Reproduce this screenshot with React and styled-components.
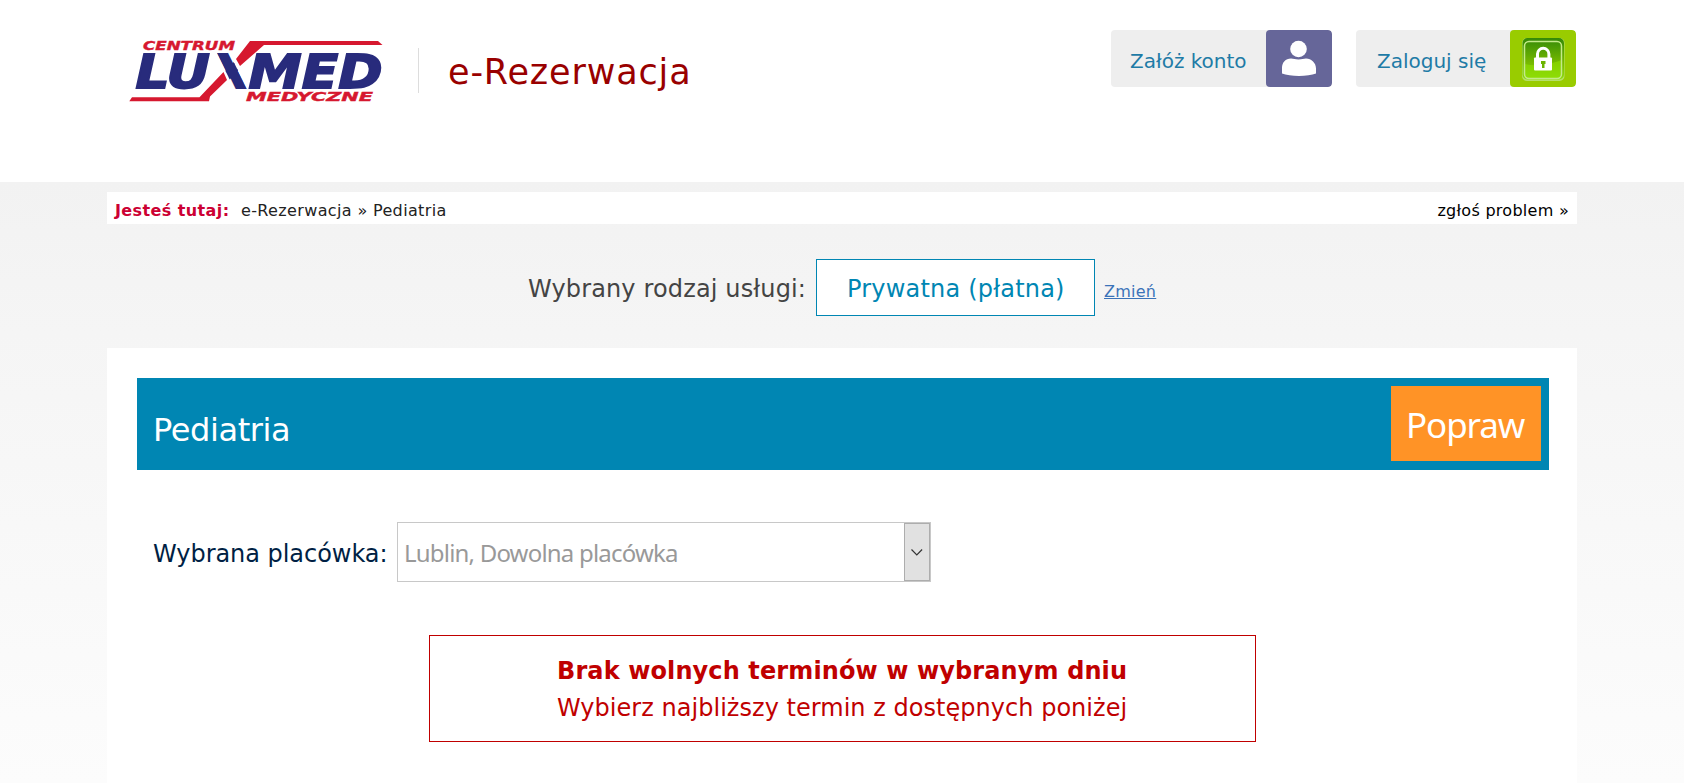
import React from "react";
import styled, { createGlobalStyle } from "styled-components";

const GlobalStyle = createGlobalStyle`
  * { box-sizing: border-box; }
  body {
    margin: 0;
    background: #fff;
    font-family: "DejaVu Sans", Verdana, sans-serif;
    overflow: hidden;
  }
`;

const Page = styled.div`
  display: flex;
  flex-direction: column;
  height: 783px;
`;

const Header = styled.header`
  display: flex;
  align-items: flex-start;
  flex: 0 0 182px;
  width: 1470px;
  margin: 0 auto;
  padding: 30px 1px 0 20px;
`;

const Logo = styled.svg`
  flex: none;
  width: 260px;
  height: 70px;
  margin-top: 5px;
`;

const Title = styled.h1`
  height: 45px;
  margin: 18px 0 0 31px;
  padding-left: 29px;
  border-left: 1px solid #ddd;
  color: #990000;
  font-size: 35px;
  font-weight: 400;
  line-height: 48px;
  letter-spacing: 0.85px;
  white-space: nowrap;
`;

const Account = styled.nav`
  display: flex;
  gap: 24px;
  margin-left: auto;
`;

const AccountButton = styled.a`
  display: flex;
  width: ${(p) => p.$width}px;
  height: 57px;
  overflow: hidden;
  border-radius: 4px;
  background: #eee;
  color: #1e7ba6;
  font-size: 20px;
  line-height: 62px;
  white-space: nowrap;
`;

const AccountLabel = styled.span`
  flex: 1;
  padding-left: ${(p) => p.$pad}px;
`;

const AccountIcon = styled.svg`
  width: 66px;
  height: 57px;
  border-radius: 4px;
  background: ${(p) => p.$color};
`;

const Main = styled.main`
  flex: 1;
  padding-top: 10px;
  background: linear-gradient(#f2f2f2, #f5f5f5 25%, #fcfcfc);
`;

const Column = styled.div`
  width: 1470px;
  margin: 0 auto;
`;

const Breadcrumb = styled.div`
  display: flex;
  height: 32px;
  padding: 0 8px;
  background: #fff;
  color: #222;
  font-size: 16px;
  line-height: 38px;
  white-space: pre;
`;

const Here = styled.b`
  width: 126px;
  color: #cc0033;
  letter-spacing: 0.4px;
`;

const Trail = styled.span`
  letter-spacing: 0.36px;
`;

const Report = styled.a`
  margin-left: auto;
  color: #000;
  letter-spacing: 0.28px;
`;

const Service = styled.section`
  display: flex;
  height: 124px;
  padding: 35px 0 0 421px;
  color: #444;
  font-size: 24px;
  line-height: 61px;
  white-space: nowrap;
`;

const ServiceLabel = styled.span`
  width: 288px;
  letter-spacing: 0.14px;
`;

const ServiceValue = styled.div`
  width: 279px;
  height: 57px;
  padding-left: 30px;
  border: 1px solid #0086b3;
  background: #fff;
  color: #0086b3;
  line-height: 59px;
  letter-spacing: 0.2px;
`;

const ChangeLink = styled.a`
  margin-left: 9px;
  color: #3b73b9;
  font-size: 16px;
  line-height: 66px;
  text-decoration: underline;
  letter-spacing: 0.25px;
`;

const Card = styled.section`
  height: 435px;
  padding: 30px 28px 0 30px;
  background: #fff;
`;

const CardHeader = styled.div`
  display: flex;
  justify-content: space-between;
  height: 92px;
  padding: 8px 8px 0 16px;
  background: #0086b3;
  color: #fff;
`;

const CardTitle = styled.h2`
  margin: 0;
  font-size: 32px;
  font-weight: 400;
  line-height: 88px;
  letter-spacing: -0.4px;
`;

const FixButton = styled.button`
  width: 150px;
  height: 75px;
  padding: 0 0 0 15px;
  border: 0;
  background: #ff9326;
  color: #fff;
  font: 35px/77px "Noto Sans", Tahoma, sans-serif;
  letter-spacing: -1.1px;
  text-align: left;
`;

const Facility = styled.div`
  display: flex;
  height: 60px;
  margin: 52px 0 0 16px;
  color: #001f44;
  font-size: 24px;
  line-height: 64px;
  white-space: nowrap;
`;

const FacilityLabel = styled.label`
  width: 244px;
  letter-spacing: -0.04px;
`;

const Select = styled.div`
  display: flex;
  justify-content: space-between;
  width: 534px;
  height: 60px;
  padding-left: 6px;
  border: 1px solid #c8c8c8;
  color: #999;
  font-family: "Noto Sans", Tahoma, sans-serif;
  font-size: 24px;
  line-height: 60px;
  letter-spacing: -0.8px;
`;

const SelectArrow = styled.svg`
  width: 26px;
  height: 58px;
  border: 1px solid #adadad;
  background: #e1e1e1;
`;

const Alert = styled.div`
  width: 827px;
  height: 107px;
  margin: 53px 0 0 292px;
  padding: 17px 0 0 127px;
  border: 1px solid #c00000;
  color: #c00000;
  font-size: 24px;
  line-height: 37px;
  white-space: nowrap;
`;

const AlertLine = styled.div`
  font-weight: ${(p) => (p.$bold ? 700 : 400)};
  letter-spacing: ${(p) => p.$track}px;
`;

function LuxmedLogo() {
  const font = { fontFamily: '"DejaVu Sans", Verdana, sans-serif', fontWeight: 700, fontStyle: "italic" };
  return (
    <Logo viewBox="127 35 260 70">
      <defs>
        <clipPath id="x-arm">
          <polygon points="215.5,51 228,51 248.5,91 235.5,91" />
        </clipPath>
      </defs>
      <g fill="#d6182f">
        <polygon points="250,41 378,41 382.5,45 264,45 240,66 236,59" />
        <polygon points="129.3,101.3 132,97.3 199.5,97.3 223.5,72 227,80 210,96.5 209,101.3" />
      </g>
      <g {...font} fill="#282b7c" stroke="#282b7c" strokeWidth="1.8" fontSize="47">
        <text x="135.5" y="88.2" textLength="74.5" lengthAdjust="spacingAndGlyphs">LU</text>
        <text x="213.5" y="88.2" clipPath="url(#x-arm)">X</text>
        <text x="248.5" y="88.2" textLength="134" lengthAdjust="spacingAndGlyphs">MED</text>
      </g>
      <g {...font} fill="#d6182f" stroke="#d6182f" strokeWidth="0.4" fontSize="12.5">
        <text x="143" y="49.8" textLength="92" lengthAdjust="spacingAndGlyphs">CENTRUM</text>
        <text x="246" y="101.2" textLength="127" lengthAdjust="spacingAndGlyphs">MEDYCZNE</text>
      </g>
    </Logo>
  );
}

function UserIcon() {
  return (
    <AccountIcon $color="#666699" viewBox="0 0 66 57">
      <circle cx="32.5" cy="19" r="8.3" fill="#fff" />
      <path d="M16 43.5V38c0-5.500 3.500-9.500 9-9.500 2.500 0 4 1 7.500 1s5-1 7.500-1c5.500 0 10 4.500 10 10v5c-8 3.300-26 3.300-34 0z" fill="#fff" />
    </AccountIcon>
  );
}

function LockIcon() {
  return (
    <AccountIcon $color="#99cc00" viewBox="0 0 66 57">
      <defs>
        <linearGradient id="lock-bg" x1="0" y1="0" x2="0" y2="1">
          <stop offset="0" stopColor="#348a08" />
          <stop offset="0.6" stopColor="#76b900" />
          <stop offset="1" stopColor="#8fdc10" />
        </linearGradient>
      </defs>
      <rect x="12" y="8" width="42.500" height="43" rx="5" fill="#b5df6a" />
      <rect x="12.500" y="8" width="41.500" height="41.500" rx="5" fill="url(#lock-bg)" />
      <path d="M15 34Q30 38 52 30V44Q52 48 48 48H19Q15 48 15 44Z" fill="#8fe000" opacity="0.6" />
      <rect x="14.500" y="11.500" width="37" height="37" rx="4.500" fill="none" stroke="#c5ea8a" strokeWidth="1.500" />
      <path d="M27.500 29V24a5.700 5.700 0 0 1 11.400 0v5" fill="none" stroke="#fff" strokeWidth="3" />
      <rect x="24" y="27.500" width="18" height="13" rx="1" fill="#fff" />
      <path d="M31 31h4.500v3h-1v4h-2.500v-4h-1z" fill="#6cb400" />
    </AccountIcon>
  );
}

export default function App() {
  return (
    <Page>
      <GlobalStyle />
      <Header>
        <LuxmedLogo />
        <Title>e-Rezerwacja</Title>
        <Account>
          <AccountButton $width={221}>
            <AccountLabel $pad={19}>Załóż konto</AccountLabel>
            <UserIcon />
          </AccountButton>
          <AccountButton $width={220}>
            <AccountLabel $pad={21}>Zaloguj się</AccountLabel>
            <LockIcon />
          </AccountButton>
        </Account>
      </Header>
      <Main>
        <Column>
          <Breadcrumb>
            <Here>Jesteś tutaj:</Here>
            <Trail>e-Rezerwacja » Pediatria</Trail>
            <Report>zgłoś problem »</Report>
          </Breadcrumb>
          <Service>
            <ServiceLabel>Wybrany rodzaj usługi:</ServiceLabel>
            <ServiceValue>Prywatna (płatna)</ServiceValue>
            <ChangeLink>Zmień</ChangeLink>
          </Service>
          <Card>
            <CardHeader>
              <CardTitle>Pediatria</CardTitle>
              <FixButton>Popraw</FixButton>
            </CardHeader>
            <Facility>
              <FacilityLabel>Wybrana placówka:</FacilityLabel>
              <Select>
                Lublin, Dowolna placówka
                <SelectArrow viewBox="0 0 24 56">
                  <path d="M6.500 25.500l5.300 5.300 5.300-5.300" fill="none" stroke="#333" strokeWidth="1.200" />
                </SelectArrow>
              </Select>
            </Facility>
            <Alert>
              <AlertLine $bold $track={0.11}>Brak wolnych terminów w wybranym dniu</AlertLine>
              <AlertLine $track={0.03}>Wybierz najbliższy termin z dostępnych poniżej</AlertLine>
            </Alert>
          </Card>
        </Column>
      </Main>
    </Page>
  );
}
